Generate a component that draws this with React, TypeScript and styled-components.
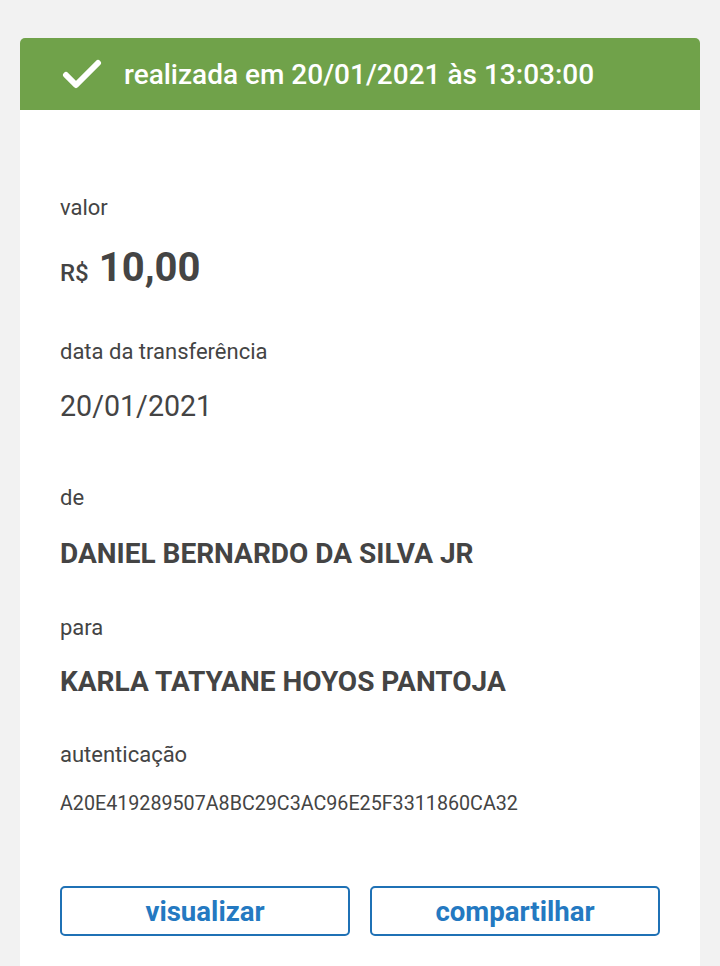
import React from "react";
import styled, { createGlobalStyle } from "styled-components";

const Global = createGlobalStyle`
  html, body { margin: 0; padding: 0; background: #f2f2f2; }
  body { font-family: Roboto, "Liberation Sans", Arial, sans-serif; color: #444; }
`;

const Page = styled.div`
  padding: 38px 20px 0;
`;

const Card = styled.div`
  background: #fff;
  border-radius: 5px 5px 0 0;
  overflow: hidden;
`;

const Header = styled.div`
  height: 72px;
  background: #70a24a;
  display: flex;
  align-items: center;
  padding-left: 42px;
  gap: 22px;
  color: #fff;
  font-size: 28px;
  font-weight: 500;
`;

const Body = styled.div`
  padding: 85px 40px 31px 40px;
  display: flex;
  flex-direction: column;
`;

const Label = styled.div<{ $top?: number }>`
  font-size: 22px;
  line-height: 26px;
  color: #444;
  margin-top: ${(p) => p.$top ?? 0}px;
`;

const Amount = styled.div`
  margin-top: 23px;
  display: flex;
  align-items: baseline;
  gap: 10px;
  line-height: 48px;
`;

const Currency = styled.span`
  font-size: 24px;
  font-weight: 500;
`;

const AmountValue = styled.span`
  font-size: 40px;
  font-weight: 700;
`;

const Value = styled.div<{ $bold?: boolean; $size: number; $top: number; $lh?: number }>`
  font-size: ${(p) => p.$size}px;
  font-weight: ${(p) => (p.$bold ? 700 : 400)};
  line-height: ${(p) => p.$lh ?? 34}px;
  margin-top: ${(p) => p.$top}px;
`;

const Buttons = styled.div`
  margin-top: 69px;
  display: grid;
  grid-template-columns: 1fr 1fr;
  gap: 20px;
`;

const Button = styled.button`
  height: 50px;
  border: 2px solid #1f71b5;
  border-radius: 5px;
  background: #fff;
  color: #2479c1;
  font-family: inherit;
  font-size: 27.6px;
  font-weight: 700;
  padding: 0;
  cursor: pointer;
`;

const Check = () => (
  <svg width="40" height="30" viewBox="0 0 40 30">
    <path d="M4 16 L14 26 L36 4" fill="none" stroke="#fff" strokeWidth="6" strokeLinecap="round" strokeLinejoin="round" />
  </svg>
);

export default function App() {
  return (
    <>
      <Global />
      <Page>
        <Card>
          <Header>
            <Check />
            <span>realizada em 20/01/2021 às 13:03:00</span>
          </Header>
          <Body>
            <Label>valor</Label>
            <Amount>
              <Currency>R$</Currency>
              <AmountValue>10,00</AmountValue>
            </Amount>
            <Label $top={42}>data da transferência</Label>
            <Value $size={28.6} $top={24}>20/01/2021</Value>
            <Label $top={62}>de</Label>
            <Value $size={28} $bold $top={26}>DANIEL BERNARDO DA SILVA JR</Value>
            <Label $top={44}>para</Label>
            <Value $size={28} $bold $top={24}>KARLA TATYANE HOYOS PANTOJA</Value>
            <Label $top={43}>autenticação</Label>
            <Value $size={19.7} $lh={26} $top={23}>A20E419289507A8BC29C3AC96E25F3311860CA32</Value>
            <Buttons>
              <Button>visualizar</Button>
              <Button>compartilhar</Button>
            </Buttons>
          </Body>
        </Card>
      </Page>
    </>
  );
}
